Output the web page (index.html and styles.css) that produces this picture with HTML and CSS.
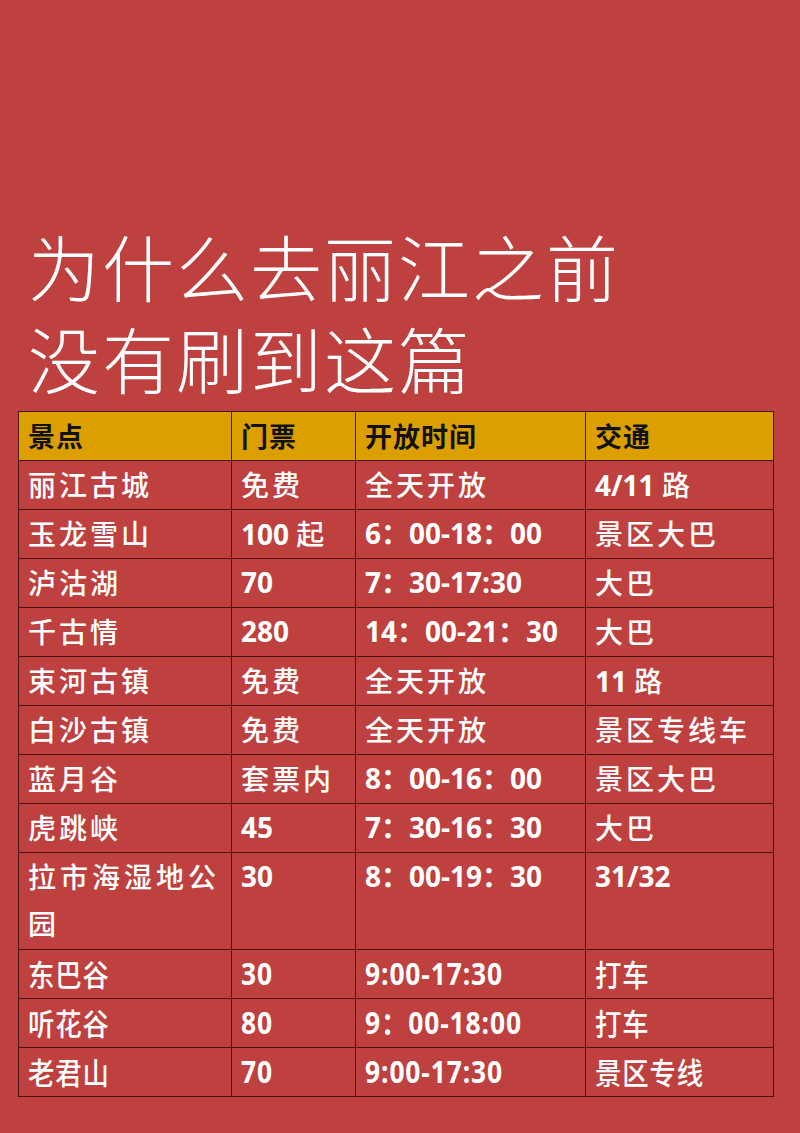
FILE: index.html
```html
<!DOCTYPE html>
<html lang="zh-CN">
<head>
<meta charset="utf-8">
<link rel="stylesheet" href="styles.css">
</head>
<body>
<div class="page">
  <h1 class="title"><span class="tl">为什么去丽江之前</span><span class="tl">没有刷到这篇</span></h1>
  <table class="tbl">
    <colgroup>
      <col class="c1"><col class="c2"><col class="c3"><col class="c4">
    </colgroup>
    <thead>
      <tr><th>景点</th><th>门票</th><th>开放时间</th><th>交通</th></tr>
    </thead>
    <tbody>
      <tr><td class="cn">丽江古城</td><td class="cn">免费</td><td class="cn">全天开放</td><td class="num">4/11 <span class="cn">路</span></td></tr>
      <tr><td class="cn">玉龙雪山</td><td class="num">100 <span class="cn">起</span></td><td class="num">6：00-18：00</td><td class="cn">景区大巴</td></tr>
      <tr><td class="cn">泸沽湖</td><td class="num">70</td><td class="num">7：30-17:30</td><td class="cn">大巴</td></tr>
      <tr><td class="cn">千古情</td><td class="num">280</td><td class="num">14：00-21：30</td><td class="cn">大巴</td></tr>
      <tr><td class="cn">束河古镇</td><td class="cn">免费</td><td class="cn">全天开放</td><td class="num">11 <span class="cn">路</span></td></tr>
      <tr><td class="cn">白沙古镇</td><td class="cn">免费</td><td class="cn">全天开放</td><td class="cn">景区专线车</td></tr>
      <tr><td class="cn">蓝月谷</td><td class="cn">套票内</td><td class="num">8：00-16：00</td><td class="cn">景区大巴</td></tr>
      <tr><td class="cn">虎跳峡</td><td class="num">45</td><td class="num">7：30-16：30</td><td class="cn">大巴</td></tr>
      <tr class="tall"><td class="cn wide">拉市海湿地公园</td><td class="num">30</td><td class="num">8：00-19：30</td><td class="num">31/32</td></tr>
      <tr class="narrow"><td class="cn"><span class="sq">东巴谷</span></td><td class="num"><span class="sq">30</span></td><td class="num"><span class="sq">9:00-17:30</span></td><td class="cn"><span class="sq">打车</span></td></tr>
      <tr class="narrow"><td class="cn"><span class="sq">听花谷</span></td><td class="num"><span class="sq">80</span></td><td class="num"><span class="sq">9：00-18:00</span></td><td class="cn"><span class="sq">打车</span></td></tr>
      <tr class="narrow"><td class="cn"><span class="sq">老君山</span></td><td class="num"><span class="sq">70</span></td><td class="num"><span class="sq">9:00-17:30</span></td><td class="cn"><span class="sq">景区专线</span></td></tr>
    </tbody>
  </table>
</div>
</body>
</html>
```
FILE: styles.css
```css
html, body {
  margin: 0;
  padding: 0;
  background: #be4140;
}
.page {
  width: 800px;
  height: 1133px;
  padding-top: 226px;
  box-sizing: border-box;
  overflow: hidden;
}
.title {
  margin: 0 0 1px 28px;
  font-family: "Liberation Serif", "Noto Sans CJK SC", serif;
  font-weight: 300;
  font-size: 72px;
  line-height: 92px;
  color: #ffffff;
  letter-spacing: 2px;
}
.tl {
  display: block;
  height: 92px;
}
.tbl {
  margin-left: 18px;
  border-collapse: collapse;
  table-layout: fixed;
  width: 756px;
}
.c1 { width: 213px; }
.c2 { width: 124px; }
.c3 { width: 230px; }
.c4 { width: 188px; }
.tbl tr {
  height: 49px;
}
.tbl th, .tbl td {
  border: 1px solid #4a1414;
  padding: 0 6px 0 9px;
  line-height: 47px;
  vertical-align: top;
  text-align: left;
  white-space: nowrap;
  overflow: hidden;
}
.tbl th {
  background: #dba000;
  color: #111111;
  font-family: "Noto Sans CJK SC", sans-serif;
  font-weight: 700;
  font-size: 27px;
  letter-spacing: 1px;
}
.tbl td {
  color: #ffffff;
  font-size: 28px;
}
.cn {
  font-family: "Noto Sans CJK SC", sans-serif;
  font-weight: 500;
  letter-spacing: 3px;
}
.num {
  font-family: "Open Sans", "Noto Sans CJK SC", sans-serif;
  font-weight: 700;
  font-size: 27px;
  letter-spacing: 0;
}
.num .cn {
  font-weight: 500;
  font-size: 28px;
}
.tbl tr.tall {
  height: 97px;
}
.tbl td.wide {
  white-space: normal;
  letter-spacing: 4px;
  word-break: break-all;
}
.tbl .narrow td {
  font-size: 30px;
  letter-spacing: 1px;
}
.sq {
  display: inline-block;
  transform: scaleX(0.88);
  transform-origin: left center;
}
```
